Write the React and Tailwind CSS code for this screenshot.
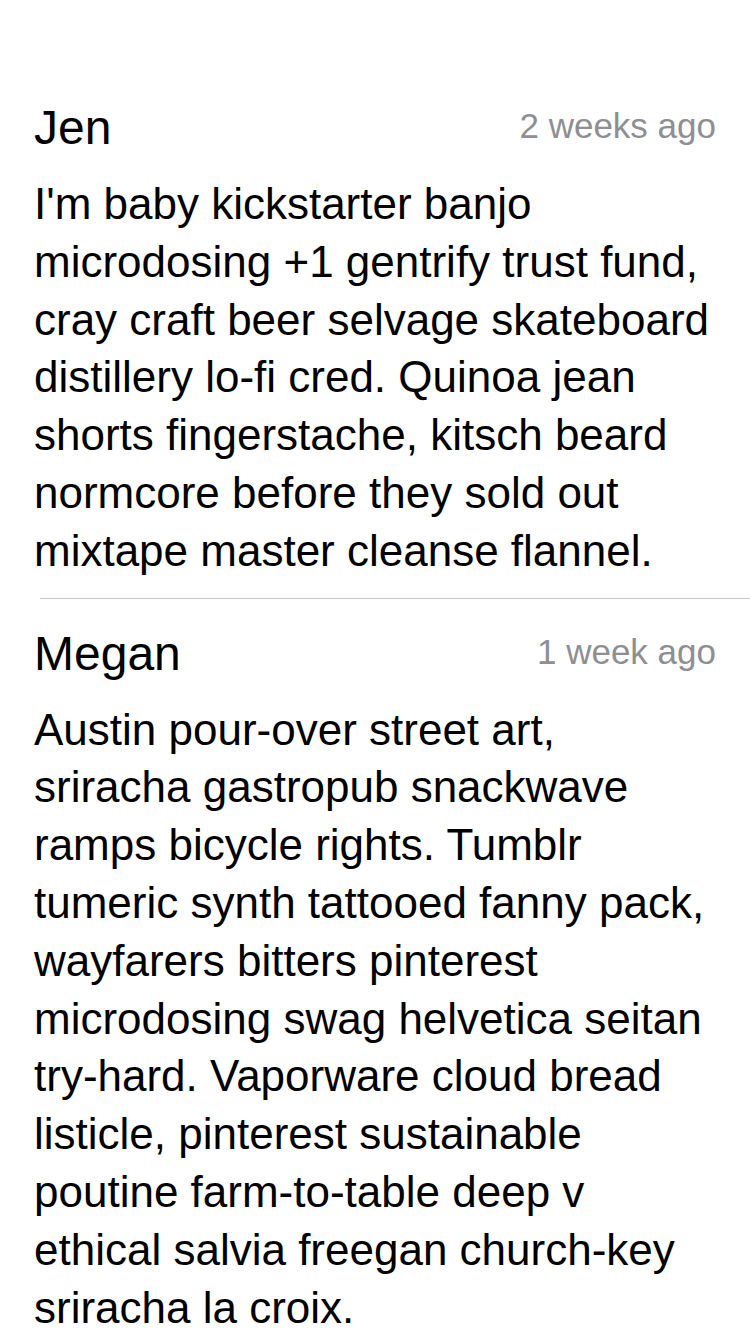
import React from 'react';

// lines kept as in the design so the wrap matches
const comments = [
  {
    name: 'Jen',
    time: '2 weeks ago',
    lines: [
      "I'm baby kickstarter banjo",
      'microdosing +1 gentrify trust fund,',
      'cray craft beer selvage skateboard',
      'distillery lo-fi cred. Quinoa jean',
      'shorts fingerstache, kitsch beard',
      'normcore before they sold out',
      'mixtape master cleanse flannel.',
    ],
  },
  {
    name: 'Megan',
    time: '1 week ago',
    lines: [
      'Austin pour-over street art,',
      'sriracha gastropub snackwave',
      'ramps bicycle rights. Tumblr',
      'tumeric synth tattooed fanny pack,',
      'wayfarers bitters pinterest',
      'microdosing swag helvetica seitan',
      'try-hard. Vaporware cloud bread',
      'listicle, pinterest sustainable',
      'poutine farm-to-table deep v',
      'ethical salvia freegan church-key',
      'sriracha la croix.',
    ],
  },
];

function Comment({ item }) {
  return (
    <div className="pt-[26px] pb-[18px] pl-[34px] pr-[34px]">
      <div className="flex items-center justify-between">
        <span className="text-[48px] leading-[58px] text-black">{item.name}</span>
        <span className="-mt-[4px] text-[35px] leading-[40px] text-[#8e8e93]">{item.time}</span>
      </div>
      <p className="mt-[18px] text-[44px] leading-[57.8px] text-black">
        {item.lines.map((l) => (
          <span key={l} className="block whitespace-nowrap">
            {l}
          </span>
        ))}
      </p>
    </div>
  );
}

export default function App() {
  return (
    <div
      className="min-h-[1334px] w-[750px] overflow-hidden bg-white pt-[73px]"
      style={{ fontFamily: '"Liberation Sans", Arial, sans-serif' }}
    >
      {comments.map((c, i) => (
        <div key={c.name}>
          <Comment item={c} />
          {i < comments.length - 1 && <div className="ml-[40px] h-px bg-[#c8c7cc]" />}
        </div>
      ))}
    </div>
  );
}
